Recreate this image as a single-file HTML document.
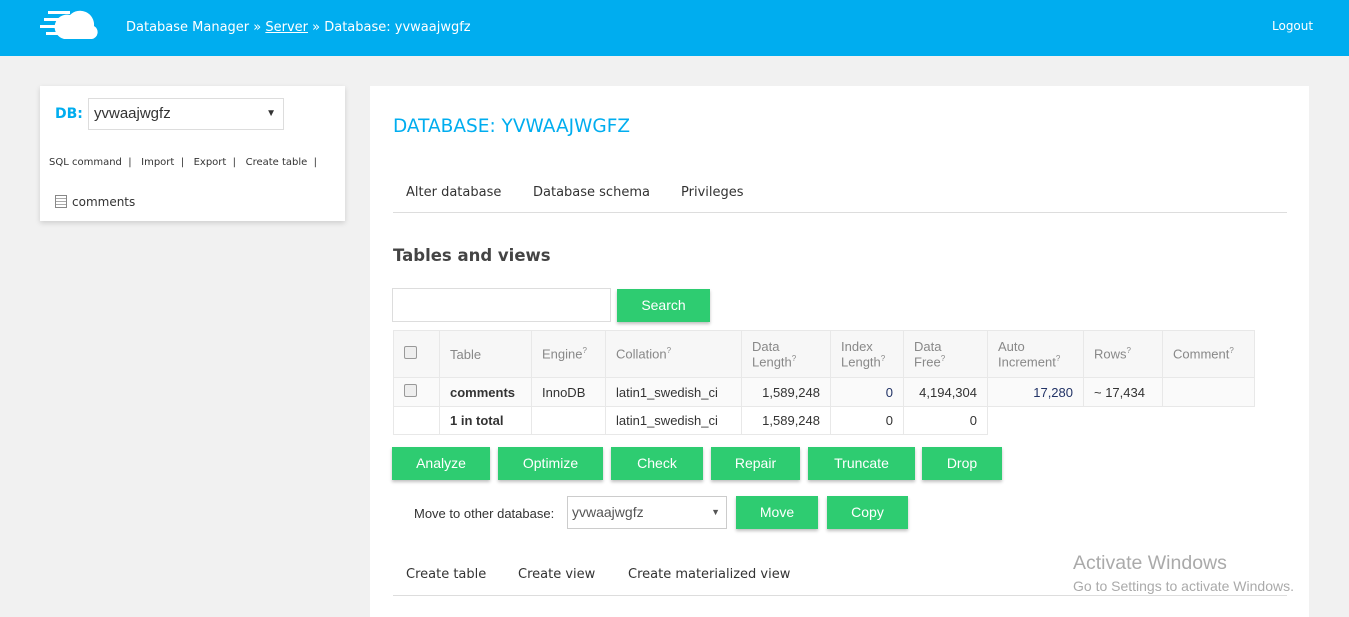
<!DOCTYPE html>
<html><head><style>
body{margin:0;width:1349px;height:617px;overflow:hidden;background:#f1f1f1;font-family:Verdana,"DejaVu Sans",sans-serif;position:relative;color:#333}
.a{position:absolute}
.hdr{left:0;top:0;width:1349px;height:56px;background:#00adef;color:#fff}
.btn{position:absolute;background:#2ecc71;color:#fff;font-size:14px;text-align:center;box-shadow:0 2px 3px rgba(0,0,0,.25);font-family:"Liberation Sans",Arial,sans-serif}
table{border-collapse:collapse;font-size:13px;font-family:"Liberation Sans",Arial,sans-serif}
td,th{border:1px solid #e8e8e8;padding:0 10px;font-weight:normal;text-align:left}
th{color:#888;background:#f7f7f7;height:46px}
sup{font-size:8px}
.r{text-align:right}
.cb{display:inline-block;width:11px;height:11px;border:1px solid #999;border-radius:2px;background:#eee}
</style></head><body>
<div class="a hdr">
<svg class="a" style="left:40px;top:8px" width="60" height="32" viewBox="0 0 60 32">
<path d="M24 31 L52 31 A7 7 0 0 0 54 18 A14 14 0 0 0 30 7 A12 12 0 0 0 24 31Z" fill="#fff"/>
<rect x="8" y="3" width="22" height="3" fill="#fff"/><rect x="4" y="10" width="22" height="3" fill="#fff"/><rect x="0" y="17" width="24" height="3" fill="#fff"/><rect x="6" y="24" width="18" height="3" fill="#fff"/>
</svg>
<div class="a" style="left:126px;top:20px;font-size:13px">Database Manager » <u>Server</u> » Database: yvwaajwgfz</div>
<div class="a" style="left:1272px;top:19px;font-size:12px">Logout</div>
</div>
<div class="a" style="left:40px;top:86px;width:305px;height:135px;background:#fff;box-shadow:0 2px 5px rgba(0,0,0,.15)">
<div class="a" style="left:15px;top:20px;color:#00adef;font-weight:bold;font-size:14px">DB:</div>
<div class="a" style="left:48px;top:12px;height:32px;border:1px solid #ddd;font-family:Arial,sans-serif;font-size:15px;line-height:30px;padding-left:5px;box-sizing:border-box;width:196px">yvwaajwgfz<span style="position:absolute;right:7px;font-size:10px">▼</span></div>
<div class="a" style="left:9px;top:71px;font-size:10px;white-space:nowrap">SQL command &nbsp;| &nbsp; Import &nbsp;| &nbsp; Export &nbsp;| &nbsp; Create table &nbsp;|</div>
<div class="a" style="left:15px;top:109px;width:10px;height:11px;border:1px solid #888;background:repeating-linear-gradient(#fff 0 2px,#aaa 2px 3px)"></div>
<div class="a" style="left:32px;top:109px;font-size:12px">comments</div>
</div>
<div class="a" style="left:370px;top:86px;width:939px;height:531px;background:#fff">
<div class="a" style="left:23px;top:30px;color:#00adef;font-size:18.5px">DATABASE: YVWAAJWGFZ</div>
<div class="a" style="left:36px;top:99px;font-size:13px">Alter database</div>
<div class="a" style="left:163px;top:99px;font-size:13px">Database schema</div>
<div class="a" style="left:311px;top:99px;font-size:13px">Privileges</div>
<div class="a" style="left:23px;top:126px;width:894px;height:1px;background:#ddd"></div>
<div class="a" style="left:23px;top:160px;font-size:16.5px;font-weight:bold;color:#444">Tables and views</div>
<div class="a" style="left:22px;top:202px;width:219px;height:34px;border:1px solid #ddd;box-sizing:border-box"></div>
<div class="a" style="left:36px;top:481px;font-size:13px">Create table</div>
<div class="a" style="left:148px;top:481px;font-size:13px">Create view</div>
<div class="a" style="left:258px;top:481px;font-size:13px">Create materialized view</div>
<div class="a" style="left:23px;top:509px;width:894px;height:1px;background:#ddd"></div>
</div>
<div class="btn" style="left:617px;top:289px;width:93px;height:33px;line-height:33px">Search</div>
<table class="a" style="left:393px;top:330px">
<tr><th style="width:25px"><span class="cb"></span></th><th style="width:71px">Table</th><th style="width:53px">Engine<sup>?</sup></th><th style="width:115px">Collation<sup>?</sup></th><th style="width:68px">Data<br>Length<sup>?</sup></th><th style="width:52px">Index<br>Length<sup>?</sup></th><th style="width:63px">Data<br>Free<sup>?</sup></th><th style="width:75px">Auto<br>Increment<sup>?</sup></th><th style="width:58px">Rows<sup>?</sup></th><th style="width:71px">Comment<sup>?</sup></th></tr>
<tr style="height:29px;background:#fafafa"><td><span class="cb"></span></td><td><b>comments</b></td><td>InnoDB</td><td>latin1_swedish_ci</td><td class="r">1,589,248</td><td class="r" style="color:#236">0</td><td class="r">4,194,304</td><td class="r" style="color:#236">17,280</td><td>~ 17,434</td><td></td></tr>
<tr style="height:28px"><td style="border:none;border-left:1px solid #e8e8e8;border-bottom:1px solid #e8e8e8"></td><td><b>1 in total</b></td><td></td><td>latin1_swedish_ci</td><td class="r">1,589,248</td><td class="r">0</td><td class="r">0</td><td style="border:none"></td><td style="border:none"></td><td style="border:none"></td></tr>
</table>
<div class="btn" style="left:392px;top:447px;width:98px;height:33px;line-height:33px">Analyze</div>
<div class="btn" style="left:498px;top:447px;width:105px;height:33px;line-height:33px">Optimize</div>
<div class="btn" style="left:611px;top:447px;width:92px;height:33px;line-height:33px">Check</div>
<div class="btn" style="left:711px;top:447px;width:89px;height:33px;line-height:33px">Repair</div>
<div class="btn" style="left:808px;top:447px;width:107px;height:33px;line-height:33px">Truncate</div>
<div class="btn" style="left:922px;top:447px;width:80px;height:33px;line-height:33px">Drop</div>
<div class="a" style="left:414px;top:506px;font-size:13px;font-family:'Liberation Sans',Arial,sans-serif">Move to other database:</div>
<div class="a" style="left:567px;top:496px;width:160px;height:33px;border:1px solid #ccc;box-sizing:border-box;font-size:14px;line-height:31px;padding-left:4px;color:#555;font-family:'Liberation Sans',Arial,sans-serif">yvwaajwgfz<span style="position:absolute;right:6px;font-size:9px">▼</span></div>
<div class="btn" style="left:736px;top:496px;width:82px;height:33px;line-height:33px">Move</div>
<div class="btn" style="left:827px;top:496px;width:81px;height:33px;line-height:33px">Copy</div>
<div class="a" style="left:1073px;top:552px;font-size:19.5px;color:#aaa;font-family:'Liberation Sans',Arial,sans-serif">Activate Windows</div>
<div class="a" style="left:1073px;top:578px;font-size:14px;color:#aaa;font-family:'Liberation Sans',Arial,sans-serif">Go to Settings to activate Windows.</div>
</body></html>
